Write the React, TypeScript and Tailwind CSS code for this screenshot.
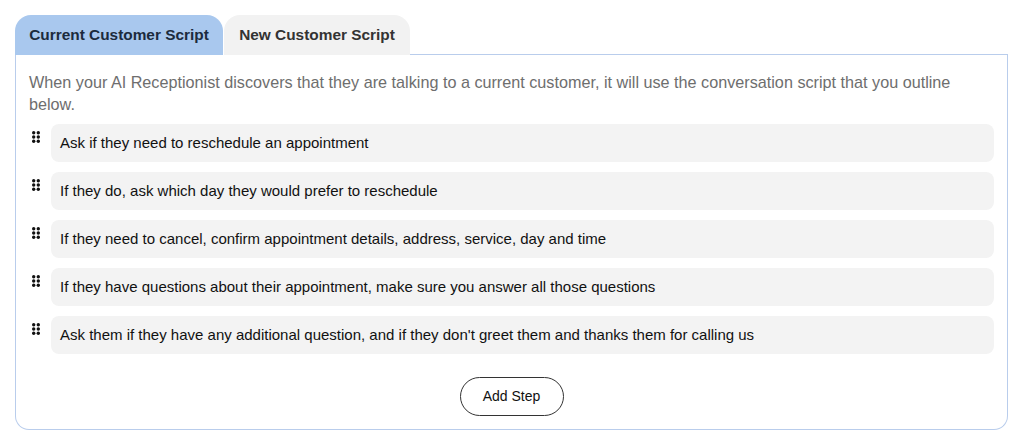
import React from "react";

const steps = [
  "Ask if they need to reschedule an appointment",
  "If they do, ask which day they would prefer to reschedule",
  "If they need to cancel, confirm appointment details, address, service, day and time",
  "If they have questions about their appointment, make sure you answer all those questions",
  "Ask them if they have any additional question, and if they don't greet them and thanks them for calling us",
];

function Handle() {
  return (
    <svg width="8" height="12" viewBox="0 0 8 12" className="shrink-0">
      {[0, 1, 2].map((r) =>
        [0, 1].map((c) => (
          <circle key={`${r}-${c}`} cx={1.7 + c * 4.6} cy={1.7 + r * 4.3} r="1.7" fill="#111" />
        ))
      )}
    </svg>
  );
}

export default function App() {
  return (
    <div className="min-h-[445px] w-[1024px] bg-white pt-[15px] pl-[15px]" style={{ fontFamily: '"Liberation Sans", Arial, sans-serif' }}>
      <div className="w-[993px]">
        <div className="flex items-end">
          <div className="flex h-[40px] w-[208px] items-center justify-center rounded-t-[16px] bg-[#a9c8ee] text-[15.4px] font-semibold text-[#1c2b3d]">
            Current Customer Script
          </div>
          <div className="ml-[1px] flex h-[40px] w-[186px] items-center justify-center rounded-t-[16px] bg-[#f2f2f2] text-[15.4px] font-semibold text-[#333]">
            New Customer Script
          </div>
          <div className="flex-1 border-b border-[#b9cdec]" />
        </div>
        <div className="rounded-b-[14px] border border-t-0 border-[#b9cdec] px-[13px] pt-[16px] pb-[13px]">
          <p className="pr-[30px] text-[16.2px] leading-[22px] text-[#6e6e6e]">
            When your AI Receptionist discovers that they are talking to a current customer, it will use the conversation script that you outline below.
          </p>
          <div className="mt-[9px] flex flex-col gap-[10px]">
            {steps.map((s) => (
              <div key={s} className="flex items-start">
                <div className="flex w-[22px] shrink-0 justify-start pl-[3px] pt-[7px]">
                  <Handle />
                </div>
                <div className="flex h-[38px] flex-1 items-center rounded-[8px] bg-[#f3f3f3] px-[9px] text-[15px] text-[#111]">
                  {s}
                </div>
              </div>
            ))}
          </div>
          <div className="mt-[23px] flex justify-center">
            <button className="h-[39px] w-[104px] rounded-full border border-[#333] bg-white text-[14px] text-[#111]">
              Add Step
            </button>
          </div>
        </div>
      </div>
    </div>
  );
}
